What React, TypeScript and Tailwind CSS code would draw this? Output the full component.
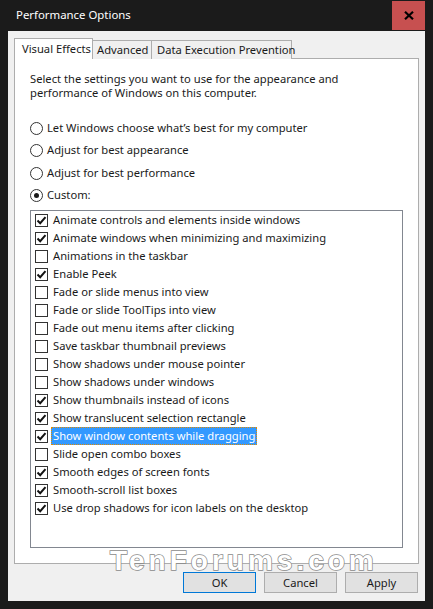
import React from "react";

const font = { fontFamily: '"Noto Sans", "Open Sans", sans-serif' };

const effects: { label: string; checked: boolean; selected?: boolean }[] = [
  { label: "Animate controls and elements inside windows", checked: true },
  { label: "Animate windows when minimizing and maximizing", checked: true },
  { label: "Animations in the taskbar", checked: false },
  { label: "Enable Peek", checked: true },
  { label: "Fade or slide menus into view", checked: false },
  { label: "Fade or slide ToolTips into view", checked: false },
  { label: "Fade out menu items after clicking", checked: false },
  { label: "Save taskbar thumbnail previews", checked: false },
  { label: "Show shadows under mouse pointer", checked: false },
  { label: "Show shadows under windows", checked: false },
  { label: "Show thumbnails instead of icons", checked: true },
  { label: "Show translucent selection rectangle", checked: true },
  { label: "Show window contents while dragging", checked: true, selected: true },
  { label: "Slide open combo boxes", checked: false },
  { label: "Smooth edges of screen fonts", checked: true },
  { label: "Smooth-scroll list boxes", checked: true },
  { label: "Use drop shadows for icon labels on the desktop", checked: true },
];

function Radio({ checked }: { checked?: boolean }) {
  return (
    <span className="w-[13px] h-[13px] rounded-full border border-[#333333] bg-white flex items-center justify-center shrink-0">
      {checked && <span className="w-[5px] h-[5px] rounded-full bg-[#1a1a1a]" />}
    </span>
  );
}

function Check({ checked }: { checked: boolean }) {
  return (
    <span className="w-[13px] h-[13px] border border-[#333333] bg-white flex items-center justify-center shrink-0">
      {checked && (
        <svg width="11" height="11" viewBox="0 0 11 11">
          <path d="M1.5 5.5 L4.2 8.2 L9.5 2.2" fill="none" stroke="#111" strokeWidth="2" />
        </svg>
      )}
    </span>
  );
}

export default function App() {
  return (
    <div className="w-[433px] h-[609px] bg-[#1b1b1b] flex flex-col px-[8px] pb-[8px] text-[11.2px] text-[#1a1a1a] whitespace-nowrap" style={font}>
      {/* Title bar */}
      <div className="h-[31px] flex items-start">
        <div className="flex-1 pl-[8px] pt-[7px] text-white text-[11.4px] leading-[16px]">Performance Options</div>
        <div className="mt-[1px] w-[33px] h-[29px] bg-[#c75050] flex items-center justify-center">
          <svg width="10" height="9" viewBox="0 0 10 9">
            <path d="M1 0.8 L9 8.2 M9 0.8 L1 8.2" stroke="#000" strokeWidth="2.2" />
          </svg>
        </div>
      </div>

      {/* Body */}
      <div className="flex-1 bg-[#f0f0f0] relative flex flex-col pt-[7px] px-[6px]">
        {/* Tabs */}
        <div className="flex items-end h-[21px] relative z-10">
          <div className="h-[21px] w-[79px] bg-white border border-b-0 border-[#adadad] pl-[7px] pt-[2px] leading-[16px]">
            Visual Effects
          </div>
          <div className="h-[19px] w-[59px] bg-[#f0f0f0] border border-l-0 border-b-0 border-[#adadad] pl-[4px] pt-[1px] leading-[16px]">
            Advanced
          </div>
          <div className="h-[19px] w-[140px] bg-[#f0f0f0] border border-l-0 border-b-0 border-[#adadad] pl-[5px] pt-[1px] leading-[16px]">
            Data Execution Prevention
          </div>
        </div>
        <div className="-mt-[1px] w-[405px] h-[506px] bg-white border border-[#adadad] pl-[15px] pt-[13px]">
          <p className="leading-[14px]">
            Select the settings you want to use for the appearance and
            <br />
            performance of Windows on this computer.
          </p>

          <div className="mt-[17px] flex flex-col">
            {[
              { label: "Let Windows choose what\u2019s best for my computer", checked: false },
              { label: "Adjust for best appearance", checked: false },
              { label: "Adjust for best performance", checked: false },
              { label: "Custom:", checked: true },
            ].map((r) => (
              <div key={r.label} className="h-[22.5px] flex items-center gap-[4px]">
                <Radio checked={r.checked} />
                <span>{r.label}</span>
              </div>
            ))}
          </div>

          <div className="mt-[3px] w-[373px] h-[338px] border border-[#828790] bg-white pl-[4px]">
            {effects.map((e) => (
              <div key={e.label} className="h-[18px] flex items-center">
                <Check checked={e.checked} />
                {e.selected ? (
                  <span className="ml-[3px] px-[1px] h-[18px] leading-[16px] bg-[#3399ff] text-white border border-dotted border-[#e08a00]">
                    {e.label}
                  </span>
                ) : (
                  <span className="ml-[5px]">{e.label}</span>
                )}
              </div>
            ))}
          </div>
        </div>

        {/* Buttons */}
        <div className="mt-[8px] flex justify-end gap-[8px] pr-[1px]">
          <button className="w-[73px] h-[21px] bg-[#e1e1e1] border border-[#0078d7] leading-[18px]">OK</button>
          <button className="w-[73px] h-[21px] bg-[#e1e1e1] border border-[#adadad] leading-[18px]">Cancel</button>
          <button className="w-[73px] h-[21px] bg-[#e1e1e1] border border-[#adadad] leading-[18px]">Apply</button>
        </div>

        {/* Watermark */}
        <div
          className="absolute left-[102px] top-[515px] text-[28px] font-bold leading-[30px] tracking-[4px] text-white pointer-events-none"
          style={{
            fontFamily: '"Liberation Sans", Arial, sans-serif',
            WebkitTextStroke: "1.5px #8a8a8a",
            paintOrder: "stroke fill",
          }}
        >
          TenForums.com
        </div>
      </div>
    </div>
  );
}
